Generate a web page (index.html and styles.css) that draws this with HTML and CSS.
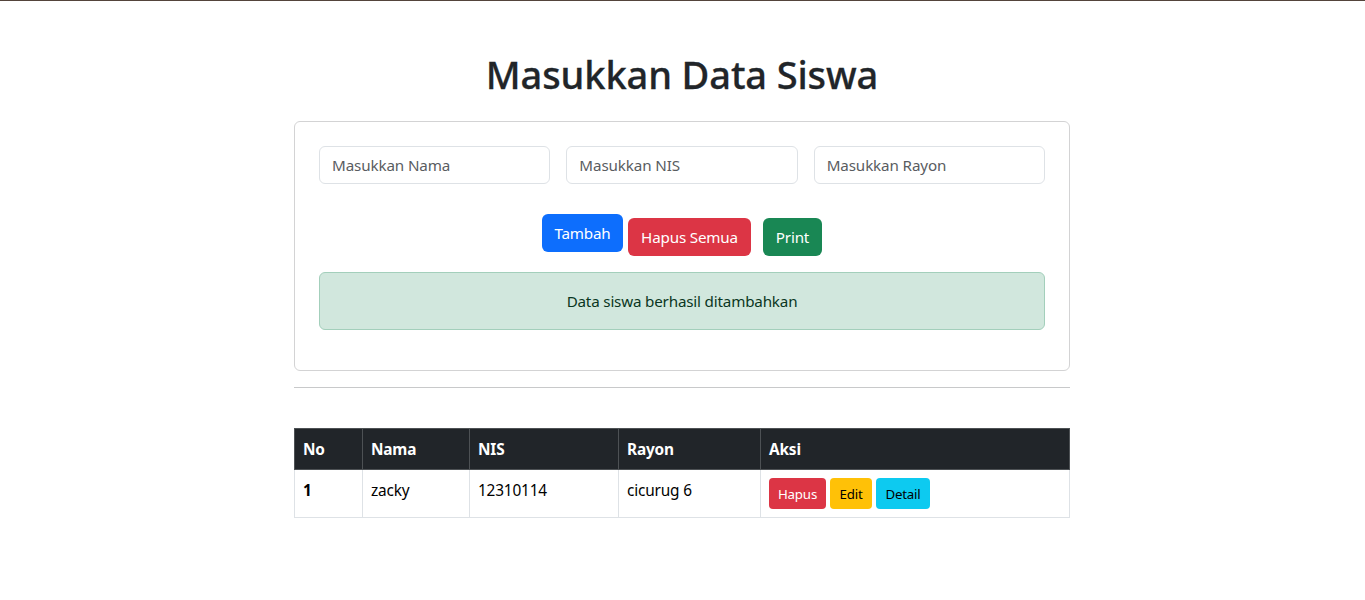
FILE: index.html
```html
<!DOCTYPE html>
<html lang="id">
<head>
<meta charset="utf-8">
<title>Data Siswa</title>
<link rel="stylesheet" href="styles.css">
</head>
<body>
<main class="container">
  <h1 class="title">Masukkan Data Siswa</h1>
  <form class="card">
    <div class="fields">
      <input class="field" type="text" placeholder="Masukkan Nama">
      <input class="field" type="text" placeholder="Masukkan NIS">
      <input class="field" type="text" placeholder="Masukkan Rayon">
    </div>
    <div class="actions">
      <button type="button" class="btn primary tambah">Tambah</button>
      <button type="button" class="btn danger hapus-semua">Hapus Semua</button>
      <button type="button" class="btn success print">Print</button>
    </div>
    <div class="alert">Data siswa berhasil ditambahkan</div>
  </form>
  <hr class="divider">
  <table class="table">
    <colgroup><col class="c-no"><col class="c-nama"><col class="c-nis"><col class="c-rayon"><col></colgroup>
    <thead><tr><th>No</th><th>Nama</th><th>NIS</th><th>Rayon</th><th>Aksi</th></tr></thead>
    <tbody><tr><th>1</th><td>zacky</td><td>12310114</td><td>cicurug 6</td>
      <td class="aksi"><div class="row-actions"><button class="btn sm danger hapus">Hapus</button><button class="btn sm warning edit">Edit</button><button class="btn sm info detail">Detail</button></div></td></tr></tbody>
  </table>
</main>
</body>
</html>
```
FILE: styles.css
```css
* { box-sizing: border-box; }
body {
  margin: 0;
  border-top: 1px solid #54443b;
  background: #fff;
  color: #212529;
  font: 15.2px/24px "Segoe UI", "Noto Sans", "Open Sans", sans-serif;
  letter-spacing: -0.18px;
}
.container { width: 776px; margin: 0 0 0 294px; padding-top: 49px; }
.title { margin: 0 0 23px; text-align: center; font-size: 38px; line-height: 48px; font-weight: 500; letter-spacing: -0.12px; -webkit-text-stroke: 0.3px #212529; }
.card { height: 250px; padding: 24px; border: 1px solid #d3d3d4; border-radius: 6px; }
.fields { display: grid; grid-template-columns: repeat(3, 1fr); gap: 16px; }
.field {
  width: 100%; height: 38px; padding: 6px 12px;
  border: 1px solid #dee2e6; border-radius: 6px;
  font: inherit; letter-spacing: -0.12px; color: #212529;
}
.field::placeholder { color: #595c5f; opacity: 1; }
.actions { display: flex; justify-content: center; align-items: flex-end; height: 42px; margin-top: 30px; }
.btn {
  height: 38px; padding: 0; border: 0; border-radius: 6px;
  font: inherit; letter-spacing: inherit; color: #fff; white-space: nowrap;
}
.tambah { width: 81px; align-self: flex-start; margin-right: 5px; }
.hapus-semua { width: 123px; margin-right: 12px; }
.print { width: 59px; }
.primary { background: #0d6efd; }
.danger { background: #dc3545; }
.success { background: #198754; }
.warning { background: #ffc107; color: #000; }
.info { background: #0dcaf0; color: #000; }
.alert {
  height: 58px; margin-top: 16px; padding: 16px; text-align: center;
  border: 1px solid #a3cfbb; border-radius: 6px; background: #d1e7dd; color: #0a3622;
}
.divider { height: 1px; margin: 16px 0 40px; border: 0; background: #c8c9ca; }
.table { width: 776px; table-layout: fixed; border-collapse: collapse; color: #000; font-size: 15.4px; }
.c-no { width: 68px; }
.c-nama { width: 107px; }
.c-nis { width: 149px; }
.c-rayon { width: 142px; }
.table th, .table td { padding: 9px 8px 7px; border: 1px solid #dee2e6; text-align: left; vertical-align: top; }
.table thead th { background: #212529; color: #fff; border-color: #4d5154; }
.table .aksi { padding: 8px; }
.row-actions { display: flex; gap: 4px; }
.sm { height: 31px; border-radius: 4px; font-size: 13.3px; }
.hapus { width: 57px; }
.edit { width: 42px; }
.detail { width: 54px; }
```
